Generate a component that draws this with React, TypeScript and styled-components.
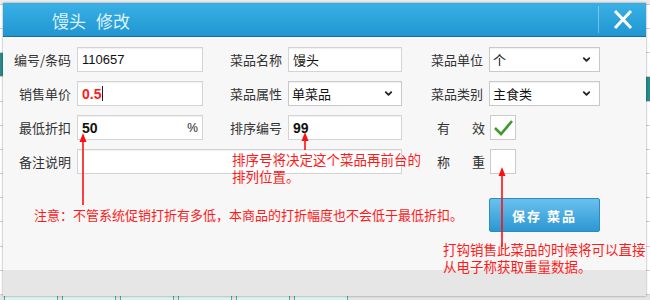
import React from 'react';
import styled, { createGlobalStyle } from 'styled-components';
import { ChevronDown } from 'lucide-react';

const GlobalStyle = createGlobalStyle`
  body {
    margin: 0;
    background: #fff;
  }
`;

type CellProps = { $active?: boolean };
type FieldProps = { $span?: number };
type ValueProps = { $red?: boolean; $bold?: boolean };

const rows = [false, false, true, false, false, false, false, false, false, false, false, false];

const App: React.FC = () => (
  <>
    <GlobalStyle />
    <Page>
      {/* 뒤쪽 목록 화면 */}
      <Backdrop>
        <HeaderRow />
        {rows.map((active, i) => (
          <BackRow key={i}>
            <BackCell $active={active} />
            <BackSpacer />
            <BackCell $active={i === 3} />
          </BackRow>
        ))}
        <TabStrip>
          {[0, 1, 2, 3, 4, 5].map((i) => (
            <Tab key={i} />
          ))}
        </TabStrip>
      </Backdrop>

      <Dialog>
        <TitleBar>
          <Title>
            <span>馒头</span>
            <span>修改</span>
          </Title>
          <CloseButton>
            <svg width="20" height="21" viewBox="0 0 20 21">
              <path d="M2 2 L18 19 M18 2 L2 19" stroke="#fff" strokeWidth="3" fill="none" />
            </svg>
          </CloseButton>
        </TitleBar>

        <Body>
          <FormGrid>
            <Label>编号/条码</Label>
            <Field>
              <Value>110657</Value>
            </Field>
            <Label>菜品名称</Label>
            <Field>
              <Value>馒头</Value>
            </Field>
            <Label>菜品单位</Label>
            <Select>
              <Value>个</Value>
              <ChevronDown size={11} strokeWidth={4} color="#222" />
            </Select>

            <Label>销售单价</Label>
            <Field>
              <Value $red $bold>0.5</Value>
              <Caret />
            </Field>
            <Label>菜品属性</Label>
            <Select>
              <Value>单菜品</Value>
              <ChevronDown size={11} strokeWidth={4} color="#222" />
            </Select>
            <Label>菜品类别</Label>
            <Select>
              <Value>主食类</Value>
              <ChevronDown size={11} strokeWidth={4} color="#222" />
            </Select>

            <Label>最低折扣</Label>
            <Field>
              <Value $bold>50</Value>
              <Unit>%</Unit>
            </Field>
            <Label>排序编号</Label>
            <Field>
              <Value $bold>99</Value>
            </Field>
            <SpacedLabel>
              <span>有</span>
              <span>效</span>
            </SpacedLabel>
            <Check>
              <svg width="22" height="20" viewBox="0 0 22 20">
                <path d="M3 10 L9 16 L20 3" stroke="#3f9a2c" strokeWidth="2.6" fill="none" />
              </svg>
            </Check>

            <Label>备注说明</Label>
            <Field $span={3} />
            <SpacedLabel>
              <span>称</span>
              <span>重</span>
            </SpacedLabel>
            <Check />

            <Note>注意：不管系统促销打折有多低，本商品的打折幅度也不会低于最低折扣。</Note>
            <SaveButton>保存 菜品</SaveButton>
          </FormGrid>
        </Body>
        <Footer />

        {/* 빨간 안내 화살표와 설명 */}
        <Arrows width="643" height="293" viewBox="0 0 643 293">
          <path d="M80 202 V136" stroke="#ff1010" strokeWidth="1.6" />
          <path d="M80 130 L76.5 139 L83.5 139 Z" fill="#ff1010" />
          <path d="M302 147 V135" stroke="#ff1010" strokeWidth="1.6" />
          <path d="M302 129 L298.5 138 L305.5 138 Z" fill="#ff1010" />
          <path d="M499 244 V170" stroke="#ff1010" strokeWidth="1.6" />
          <path d="M499 164 L495.5 173 L502.5 173 Z" fill="#ff1010" />
        </Arrows>
        <Callout style={{ left: 229, top: 148 }}>
          排序号将决定这个菜品再前台的
          <br />
          排列位置。
        </Callout>
        <Callout style={{ left: 440, top: 238 }}>
          打钩销售此菜品的时候将可以直接
          <br />
          从电子称获取重量数据。
        </Callout>
      </Dialog>
    </Page>
  </>
);

export default App;

const Page = styled.div`
  position: relative;
  width: 650px;
  height: 300px;
  overflow: hidden;
  background: #fff;
  font-family: 'Noto Sans CJK SC', 'Noto Sans', sans-serif;
`;

const Backdrop = styled.div`
  display: flex;
  flex-direction: column;
  height: 300px;
`;

const HeaderRow = styled.div`
  height: 4px;
  background: #ececec;
  border-bottom: 1px solid #c8c8c8;
`;

const BackRow = styled.div`
  display: flex;
  height: 24px;
  border-bottom: 1px solid #d0d0d0;
`;

const BackCell = styled.div<CellProps>`
  width: 4px;
  background: ${(props) => (props.$active ? '#2a8a8a' : '#fff')};
`;

const BackSpacer = styled.div`
  flex: 1;
`;

const TabStrip = styled.div`
  display: flex;
  gap: 4px;
  padding: 0 4px;
  flex: 1;
  background: #e4e4e4;
  align-items: flex-end;
`;

const Tab = styled.div`
  width: 52px;
  height: 4px;
  border: 1px solid #4aa8a8;
  border-bottom: none;
  background: #dff0f0;
`;

const Dialog = styled.div`
  position: absolute;
  left: 3px;
  top: 3px;
  width: 643px;
  height: 293px;
  display: flex;
  flex-direction: column;
  background: #f7f7f7;
  box-shadow: 0 0 2px rgba(0, 0, 0, 0.45);
`;

const TitleBar = styled.div`
  display: flex;
  align-items: center;
  height: 33px;
  border-bottom: 1px solid #1a6e9e;
  background: linear-gradient(#39b0e5, #2196d2);
`;

const Title = styled.div`
  flex: 1;
  display: flex;
  gap: 10px;
  padding-left: 49px;
  padding-top: 1px;
  font-size: 17px;
  color: #dff3fc;
`;

const CloseButton = styled.div`
  display: flex;
  align-items: center;
  justify-content: center;
  width: 46px;
  height: 27px;
  border-left: 1px solid rgba(255, 255, 255, 0.35);
  padding-left: 1px;
`;

const Body = styled.div`
  flex: 1;
  padding: 10px 0 0 8px;
`;

const FormGrid = styled.div`
  display: grid;
  grid-template-columns: 66px 126px 85px 114px 87px 111px;
  grid-template-rows: repeat(4, 25px) 49px;
  row-gap: 9px;
`;

const Label = styled.div`
  display: flex;
  align-items: center;
  justify-content: flex-end;
  padding-right: 6px;
  font-size: 13px;
  color: #333;
  white-space: nowrap;
`;

const SpacedLabel = styled(Label)`
  justify-content: space-between;
  padding-left: 35px;
  padding-right: 4px;
`;

const Field = styled.div<FieldProps>`
  display: flex;
  align-items: center;
  grid-column: span ${(props) => props.$span || 1};
  padding: 0 4px;
  background: #fff;
  border: 1px solid #d4d4d4;
  box-shadow: inset 0 1px 1px rgba(0, 0, 0, 0.06);
`;

const Select = styled(Field)`
  justify-content: space-between;
  padding: 0 7px 0 3px;
  border-color: #c9c9c9;
`;

const Value = styled.span<ValueProps>`
  font-family: ${(props) =>
    props.$bold ? "'Liberation Sans', sans-serif" : "'Liberation Sans', 'Noto Sans CJK SC', sans-serif"};
  font-size: ${(props) => (props.$bold ? '14px' : '13px')};
  font-weight: ${(props) => (props.$bold ? 700 : 400)};
  color: ${(props) => (props.$red ? '#ff1a1a' : '#111')};
`;

const Caret = styled.span`
  width: 1px;
  height: 15px;
  margin-left: 1px;
  background: #222;
`;

const Unit = styled.span`
  margin-left: auto;
  font-family: 'Liberation Sans', sans-serif;
  font-size: 12px;
  color: #222;
`;

const Check = styled.div`
  display: flex;
  align-items: center;
  justify-content: center;
  width: 24px;
  margin-left: 1px;
  background: #fff;
  border: 1px solid #cbcbcb;
`;

const Note = styled.div`
  grid-column: 1 / span 5;
  align-self: end;
  margin-bottom: 8px;
  padding-left: 23px;
  font-size: 13px;
  color: #ff1a1a;
  white-space: nowrap;
`;

const SaveButton = styled.div`
  display: flex;
  align-items: center;
  justify-content: center;
  height: 34px;
  align-self: end;
  box-sizing: border-box;
  border: 1px solid #2b8cc5;
  border-radius: 2px;
  background: linear-gradient(#6ac1ee, #2c97d2);
  font-size: 13px;
  font-weight: 700;
  letter-spacing: 2px;
  color: #fff;
`;

const Footer = styled.div`
  height: 26px;
  background: #e6e6e6;
`;

const Arrows = styled.svg`
  position: absolute;
  left: 0;
  top: 0;
  pointer-events: none;
`;

const Callout = styled.div`
  position: absolute;
  font-size: 13.5px;
  line-height: 17px;
  color: #ff1a1a;
  white-space: nowrap;
  pointer-events: none;
`;
